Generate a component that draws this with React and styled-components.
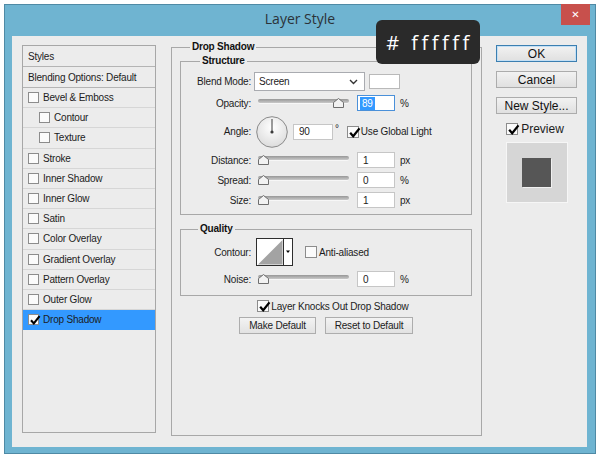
import React from "react";
import styled, { createGlobalStyle } from "styled-components";

const GlobalStyle = createGlobalStyle`
  html, body {
    margin: 0;
    padding: 0;
    background: #fff;
  }
  body {
    width: 600px;
    height: 459px;
    overflow: hidden;
    font-family: "Liberation Sans", Arial, sans-serif;
  }
`;

const effects = [
    {name: "Bevel & Emboss"},
    {name: "Contour", sub: true},
    {name: "Texture", sub: true},
    {name: "Stroke"},
    {name: "Inner Shadow"},
    {name: "Inner Glow"},
    {name: "Satin"},
    {name: "Color Overlay"},
    {name: "Gradient Overlay"},
    {name: "Pattern Overlay"},
    {name: "Outer Glow"},
    {name: "Drop Shadow", active: true},
];

const Check = ({checked, size = 12}) => (
    <CheckBox $size={size}>
        {checked && (
            <svg width={size + 1} height={size + 1} viewBox="0 0 12 12">
                <path d="M2 6.3 L4.8 9.4 L10.6 2.2" stroke="#000" strokeWidth="2.1" fill="none"/>
            </svg>
        )}
    </CheckBox>
);

const Slider = ({value}) => (
    <SliderWrap>
        <SliderBar/>
        <Thumb style={{left: `${value * 0.84}px`}}>
            <svg width="11" height="10" viewBox="0 0 11 10">
                <path d="M5.5 0.5 L10.5 4.5 V9.5 H0.5 V4.5 Z" fill="#f2f2f2" stroke="#6e6e6e"/>
            </svg>
        </Thumb>
    </SliderWrap>
);

const Dial = () => (
    <DialWrap>
        <svg width="32" height="32" viewBox="0 0 32 32">
            <defs>
                <radialGradient id="dialFill" cx="50%" cy="35%" r="65%">
                    <stop offset="0" stopColor="#ffffff"/>
                    <stop offset="1" stopColor="#dcdcdc"/>
                </radialGradient>
            </defs>
            <circle cx="16" cy="16" r="15.3" fill="url(#dialFill)" stroke="#8a8a8a"/>
            <line x1="16" y1="16" x2="16" y2="3" stroke="#3a3a3a" strokeWidth="1"/>
            <circle cx="16" cy="16" r="1.6" fill="#3a3a3a"/>
        </svg>
    </DialWrap>
);

const ContourPicker = () => (
    <PickerWrap>
        <svg width="37" height="28" viewBox="0 0 37 28">
            <rect x="0.5" y="0.5" width="36" height="27" fill="#fff" stroke="#2e2e2e"/>
            <path d="M2 26.5 L26.5 2 L26.5 26.5 Z" fill="#a3a3a3"/>
            <line x1="27.5" y1="1" x2="27.5" y2="27" stroke="#2e2e2e"/>
            <path d="M30 12.5 L34 12.5 L32 15 Z" fill="#000"/>
        </svg>
    </PickerWrap>
);

const App = () => {
    return (
        <Page>
            <GlobalStyle/>
            <Window>
                <TitleBar>
                    <span/>
                    <Title>Layer Style</Title>
                    <CloseButton>✕</CloseButton>
                </TitleBar>
                <Body>
                    <StylesList>
                        <ListHeader>Styles</ListHeader>
                        <ListHeader>Blending Options: Default</ListHeader>
                        {effects.map((item) => (
                            <ListItem key={item.name} $sub={item.sub} $active={item.active}>
                                <Check checked={item.active} size={11}/>
                                {item.name}
                            </ListItem>
                        ))}
                    </StylesList>

                    <MainPanel>
                        <Legend $left={10}>Drop Shadow</Legend>

                        <Group>
                            <Legend $left={19}>Structure</Legend>
                            <Rows>
                                <Row $h={19}>
                                    <Label>Blend Mode:</Label>
                                    <Select>
                                        Screen
                                        <svg width="9" height="6" viewBox="0 0 9 6">
                                            <path d="M1 1 L4.5 4.5 L8 1" stroke="#333" strokeWidth="1.4" fill="none"/>
                                        </svg>
                                    </Select>
                                    <Swatch/>
                                </Row>
                                <Row $h={16}>
                                    <Label>Opacity:</Label>
                                    <Slider value={89}/>
                                    <Field $w={38} $focused>
                                        <Selected>89</Selected>
                                    </Field>
                                    <Unit>%</Unit>
                                </Row>
                                <Row $h={33}>
                                    <Label>Angle:</Label>
                                    <Dial/>
                                    <Field $w={40} $gap={5}>90</Field>
                                    <Degree>°</Degree>
                                    <Check checked/>
                                    <CheckLabel>Use Global Light</CheckLabel>
                                </Row>
                                <Row $h={16}>
                                    <Label>Distance:</Label>
                                    <Slider value={0}/>
                                    <Field $w={38}>1</Field>
                                    <Unit>px</Unit>
                                </Row>
                                <Row $h={16}>
                                    <Label>Spread:</Label>
                                    <Slider value={0}/>
                                    <Field $w={38}>0</Field>
                                    <Unit>%</Unit>
                                </Row>
                                <Row $h={16}>
                                    <Label>Size:</Label>
                                    <Slider value={0}/>
                                    <Field $w={38}>1</Field>
                                    <Unit>px</Unit>
                                </Row>
                            </Rows>
                        </Group>

                        <Group $top={8}>
                            <Legend $left={17}>Quality</Legend>
                            <QualityRows>
                                <Row $h={28}>
                                    <Label>Contour:</Label>
                                    <ContourPicker/>
                                    <Check/>
                                    <CheckLabel>Anti-aliased</CheckLabel>
                                </Row>
                                <Row $h={16}>
                                    <Label>Noise:</Label>
                                    <Slider value={0}/>
                                    <Field $w={38}>0</Field>
                                    <Unit>%</Unit>
                                </Row>
                            </QualityRows>
                        </Group>

                        <KnockRow>
                            <Check checked/>
                            <CheckLabel>Layer Knocks Out Drop Shadow</CheckLabel>
                        </KnockRow>

                        <ButtonRow>
                            <SmallButton $w={77}>Make Default</SmallButton>
                            <SmallButton $w={88}>Reset to Default</SmallButton>
                        </ButtonRow>
                    </MainPanel>

                    <Side>
                        <Button $primary>OK</Button>
                        <Button>Cancel</Button>
                        <Button>New Style...</Button>
                        <PreviewToggle>
                            <Check checked/>
                            Preview
                        </PreviewToggle>
                        <PreviewBox>
                            <PreviewSwatch/>
                        </PreviewBox>
                    </Side>
                </Body>
                <ColorTip># ffffff</ColorTip>
            </Window>
        </Page>
    )
}

const Page = styled.div`
  width: 600px;
  height: 459px;
  padding: 4px;
  box-sizing: border-box;
`;

const Window = styled.div`
  position: relative;
  width: 592px;
  height: 450px;
  box-sizing: border-box;
  background: #6fb4d1;
  border: 1px solid #4f8aa5;
  display: flex;
  flex-direction: column;
`;

const TitleBar = styled.div`
  display: grid;
  grid-template-columns: 1fr auto 1fr;
  align-items: start;
  height: 31px;
  flex-shrink: 0;
`;

const Title = styled.div`
  font-family: "Open Sans", "Noto Sans", sans-serif;
  font-size: 14px;
  line-height: 28px;
  color: #2b3238;
`;

const CloseButton = styled.div`
  justify-self: end;
  width: 29px;
  height: 21px;
  margin: -1px 5px 0 0;
  background: #c8504c;
  color: #fff;
  font-family: "DejaVu Sans", sans-serif;
  font-size: 10px;
  font-weight: bold;
  display: flex;
  align-items: center;
  justify-content: center;
`;

const Body = styled.div`
  flex: 1;
  margin: 0 8px 6px 7px;
  background: #ececec;
  padding: 5px 0 0 10px;
  display: flex;
  align-items: flex-start;
  font-size: 10px;
  letter-spacing: -0.2px;
  color: #1c1c1c;
`;

const StylesList = styled.div`
  margin-top: 4px;
  width: 134px;
  height: 388px;
  box-sizing: border-box;
  border: 1px solid #a7a7a7;
  flex-shrink: 0;
`;

const ListHeader = styled.div`
  height: 20px;
  border-bottom: 1px solid #b4b4b4;
  display: flex;
  align-items: center;
  padding-left: 5px;
`;

const ListItem = styled.div`
  height: 19.2px;
  border-bottom: 1px solid ${p => p.$active ? "#3399ff" : "#d6d6d6"};
  background: ${p => p.$active ? "#3399ff" : "transparent"};
  display: flex;
  align-items: center;
  gap: 4px;
  padding-left: ${p => p.$sub ? 16 : 5}px;
`;

const CheckBox = styled.span`
  position: relative;
  width: ${p => p.$size}px;
  height: ${p => p.$size}px;
  box-sizing: border-box;
  border: 1px solid #8c8c8c;
  background: #fbfbfb;
  flex-shrink: 0;
  display: inline-flex;
  align-items: center;
  justify-content: center;

  svg {
    position: absolute;
    left: 0;
    top: -1px;
  }
`;

const MainPanel = styled.fieldset`
  margin: 0 0 0 15px;
  width: 311px;
  height: 395px;
  box-sizing: border-box;
  min-width: 0;
  border: 1px solid #a8a8a8;
  padding: 0 9px 0 8px;
  flex-shrink: 0;
`;

const Legend = styled.legend`
  font-weight: bold;
  font-size: 10px;
  line-height: 12px;
  padding: 0 2px;
  margin-left: ${p => p.$left}px;
  color: #111;
`;

const Group = styled.fieldset`
  margin: ${p => p.$top || 2}px 0 0;
  padding: 0;
  min-width: 0;
  border: 1px solid #a8a8a8;
`;

const Rows = styled.div`
  display: flex;
  flex-direction: column;
  gap: 4px;
  padding: 5px 0 6px;
`;

const QualityRows = styled.div`
  display: flex;
  flex-direction: column;
  gap: 5px;
  padding: 3px 0 8px;
`;

const Row = styled.div`
  display: flex;
  align-items: center;
  height: ${p => p.$h}px;
`;

const Label = styled.div`
  width: 70px;
  text-align: right;
  margin-right: 3px;
  flex-shrink: 0;
`;

const Select = styled.div`
  width: 111px;
  height: 19px;
  box-sizing: border-box;
  background: #fff;
  border: 1px solid #a9abb0;
  display: flex;
  align-items: center;
  justify-content: space-between;
  padding: 0 6px 0 4px;
  margin-right: 4px;
`;

const Swatch = styled.div`
  width: 31px;
  height: 15px;
  box-sizing: border-box;
  background: #fff;
  border: 1px solid #b9b9b9;
`;

const SliderWrap = styled.div`
  position: relative;
  width: 91px;
  height: 16px;
  margin: 0 8px 0 4px;
`;

const SliderBar = styled.div`
  margin-top: 4px;
  height: 4px;
  border-radius: 2px;
  background: linear-gradient(#979797, #c9c9c9);
  box-shadow: 0 1px 0 #f7f7f7;
`;

const Thumb = styled.div`
  position: absolute;
  top: 3px;
  width: 11px;
  height: 10px;
  line-height: 0;
`;

const Field = styled.div`
  width: ${p => p.$w}px;
  height: 16px;
  box-sizing: border-box;
  background: #fff;
  border: 1px solid ${p => p.$focused ? "#4a90d9" : "#c6c6c6"};
  padding-left: ${p => p.$focused ? 2 : 5}px;
  display: flex;
  align-items: center;
  flex-shrink: 0;
  margin-left: ${p => p.$gap || 0}px;
`;

const Selected = styled.span`
  background: #3399ff;
  color: #fff;
  padding: 1px 2px;
`;

const Unit = styled.span`
  margin-left: 5px;
`;

const Degree = styled.span`
  margin: -6px 8px 0 2px;
`;

const CheckLabel = styled.span`
  margin-left: 2px;
`;

const DialWrap = styled.div`
  width: 32px;
  height: 32px;
  margin-left: 2px;
  line-height: 0;
`;

const PickerWrap = styled.div`
  width: 37px;
  height: 28px;
  margin: 0 12px 0 2px;
  line-height: 0;
`;

const KnockRow = styled.div`
  display: flex;
  align-items: center;
  justify-content: center;
  height: 12px;
  margin-top: 4px;
  padding-left: 14px;
`;

const ButtonRow = styled.div`
  display: flex;
  justify-content: center;
  gap: 9px;
  margin-top: 5px;
`;

const SmallButton = styled.div`
  width: ${p => p.$w}px;
  height: 17px;
  box-sizing: border-box;
  border: 1px solid #adadad;
  background: linear-gradient(#f3f3f3, #e2e2e2);
  display: flex;
  align-items: center;
  justify-content: center;
`;

const Side = styled.div`
  margin: 4px 0 0 14px;
  width: 81px;
  display: flex;
  flex-direction: column;
  align-items: center;
  gap: 9px;
  font-size: 12px;
  letter-spacing: 0;
`;

const Button = styled.div`
  width: 81px;
  height: 17px;
  box-sizing: border-box;
  border: 1px solid ${p => p.$primary ? "#3c7fb1" : "#acacac"};
  box-shadow: ${p => p.$primary ? "inset 0 0 0 1px #c4e0f5" : "none"};
  background: linear-gradient(#f2f2f2, #e0e0e0);
  display: flex;
  align-items: center;
  justify-content: center;
  color: #111;
`;

const PreviewToggle = styled.div`
  display: flex;
  align-items: center;
  gap: 3px;
  height: 13px;
  margin-top: -1px;
  margin-right: 3px;
`;

const PreviewBox = styled.div`
  width: 62px;
  height: 61px;
  box-sizing: border-box;
  margin-top: -2px;
  background: #d6d6d6;
  border: 1px solid #f6f6f6;
  display: flex;
  align-items: center;
  justify-content: center;
`;

const PreviewSwatch = styled.div`
  width: 29px;
  height: 29px;
  background: #565656;
  box-shadow: 1px 1px 0 #f0f0f0;
`;

const ColorTip = styled.div`
  position: absolute;
  left: 371px;
  top: 15px;
  width: 104px;
  height: 44px;
  border-radius: 6px;
  background: #2a2a2a;
  color: #fff;
  font-family: "Open Sans", "Noto Sans", sans-serif;
  font-size: 20px;
  letter-spacing: 3.5px;
  display: flex;
  align-items: center;
  justify-content: center;
  padding-left: 3px;
  box-sizing: border-box;
`;

export default App;
